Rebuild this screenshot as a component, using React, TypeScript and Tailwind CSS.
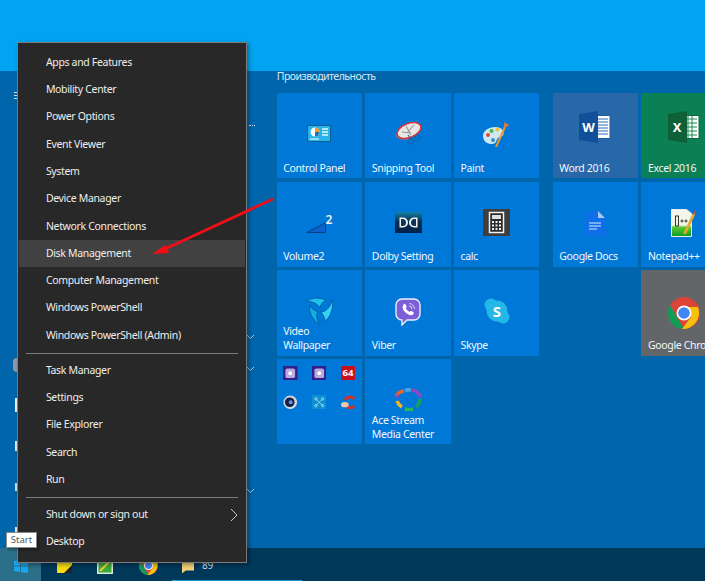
import * as React from "react";

const font = "font-['Noto_Sans',sans-serif]";

const menuTop = [
  "Apps and Features",
  "Mobility Center",
  "Power Options",
  "Event Viewer",
  "System",
  "Device Manager",
  "Network Connections",
  "Disk Management",
  "Computer Management",
  "Windows PowerShell",
  "Windows PowerShell (Admin)",
];
const menuMid = ["Task Manager", "Settings", "File Explorer", "Search", "Run"];

function MenuRow({ label, active, arrow }: { label: string; active?: boolean; arrow?: boolean }) {
  return (
    <div className={`flex h-[27.3px] items-center justify-between pl-[27px] pr-[7.5px] text-[10.5px] tracking-[-0.33px] text-[#eeeeee] ${active ? "bg-[#414141]" : ""}`}>
      <span>{label}</span>
      {arrow && (
        <svg width="8" height="14" viewBox="0 0 8 14" fill="none" stroke="#c4c4c4" strokeWidth="1">
          <path d="M1 1l6 6-6 6" />
        </svg>
      )}
    </div>
  );
}

function Separator() {
  return <div className="mx-[7px] my-[3.4px] h-px bg-[#7b7b7b]" />;
}

function Tile({ label, icon, bg = "bg-[#0078d7]", iconTop = "pt-[21px]" }: { label?: string; icon: React.ReactNode; bg?: string; iconTop?: string }) {
  return (
    <div className={`flex h-[85.33px] w-[85.33px] shrink-0 flex-col overflow-hidden ${bg}`}>
      <div className={`flex h-[50px] items-start justify-center ${iconTop}`}>{icon}</div>
      {label && <div className="mt-auto whitespace-pre px-[6.5px] pb-[3.5px] text-[10.5px] leading-[14px] tracking-[-0.35px] text-[#f1f7fc]">{label}</div>}
    </div>
  );
}

function ControlPanelIcon() {
  return (
    <svg width="24" height="17" viewBox="0 0 24 17">
      <rect x="0.500" y="0.500" width="23" height="16" fill="#27b4ea" stroke="#0b5f95" />
      <circle cx="8" cy="7" r="4.500" fill="#f4fbff" />
      <path d="M8 7V2.500A4.500 4.500 0 0 1 12.500 7z" fill="#f39a1f" />
      <path d="M8 7h4.500A4.500 4.500 0 0 1 8 11.500z" fill="#2a6fb8" />
      <path d="M15 4h6M15 7h6M15 10h6" stroke="#e3f6fd" strokeWidth="1.500" />
      <path d="M3 14h9" stroke="#e3f6fd" strokeWidth="1.200" />
    </svg>
  );
}

function SnipIcon() {
  return (
    <svg width="27" height="24" viewBox="0 0 27 24">
      <ellipse cx="9.500" cy="13.500" rx="9" ry="4.500" fill="#4a80c4" />
      <ellipse cx="14" cy="8.500" rx="12.500" ry="7" transform="rotate(-22 14 8.500)" fill="#e9e5e2" stroke="#d8323a" strokeWidth="1.500" />
      <path d="M11 4l5 9M19 3l-7 8M7 10l9 1" stroke="#97979d" strokeWidth="1.100" />
      <circle cx="16" cy="19.500" r="2.500" fill="none" stroke="#0f67b5" strokeWidth="1.300" />
      <circle cx="22.500" cy="16" r="2.500" fill="none" stroke="#0f67b5" strokeWidth="1.300" />
      <path d="M13 13l3 4M18 15l3 0" stroke="#0f67b5" strokeWidth="1.200" />
    </svg>
  );
}

function PaintIcon() {
  return (
    <svg width="27" height="26" viewBox="0 0 27 26">
      <path d="M0 15C0 9.500 6 6 12 6c6 0 9 3 8.500 7-.5 3-4 2.500-6 4.500C13 19.500 13.500 23 8.500 23 4 23 0 20 0 15z" fill="#cde8f3" />
      <circle cx="5" cy="14" r="2" fill="#e0483a" />
      <circle cx="8.500" cy="10" r="2" fill="#4bb849" />
      <circle cx="14.500" cy="8.500" r="2" fill="#f2c037" />
      <circle cx="10" cy="19" r="2" fill="#2b8fd6" />
      <path d="M13 26L22 6" stroke="#f0962b" strokeWidth="2" />
      <path d="M20.500 7l1-6 5 3.500z" fill="#d9793a" />
    </svg>
  );
}

function VolumeIcon() {
  return (
    <div className="relative h-[18px] w-[26px]">
      <svg width="20" height="11" viewBox="0 0 20 11" className="absolute bottom-0 left-0">
        <path d="M.8 10.500L19.500.8v9.700z" fill="#0a62cc" stroke="#0a3f86" />
      </svg>
      <span className="absolute right-0 top-[-1px] text-[12px] font-semibold leading-none text-[#eeeeee]">2</span>
    </div>
  );
}

function DolbyIcon() {
  return (
    <svg width="27" height="21" viewBox="0 0 27 21">
      <defs>
        <linearGradient id="dolbyBg" x1="0" y1="0" x2="0" y2="1">
          <stop offset="0" stopColor="#1580a8" />
          <stop offset="0.45" stopColor="#08304e" />
          <stop offset="1" stopColor="#03204a" />
        </linearGradient>
      </defs>
      <rect width="27" height="21" fill="url(#dolbyBg)" />
      <path d="M4.500 5.500H8a5 5 0 0 1 5 5 5 5 0 0 1-5 5H4.500zM22.500 5.500H19a5 5 0 0 0-5 5 5 5 0 0 0 5 5h3.500z" fill="#f2f2f2" />
      <path d="M6 7h1.500a3.500 3.500 0 0 1 0 7H6zM21 7h-1.500a3.500 3.500 0 0 0 0 7H21z" fill="#0b3559" />
    </svg>
  );
}

function CalcIcon() {
  return (
    <svg width="27" height="27" viewBox="0 0 27 27">
      <rect width="27" height="27" fill="#3e3e3e" />
      <rect x="6.500" y="3.500" width="14" height="20" fill="#2a2a2a" stroke="#f2f2f2" strokeWidth="1.500" />
      <rect x="9" y="6" width="9" height="4" fill="#dddddd" />
      <path d="M9 13h2M12.500 13h2M16 13h2M9 16.500h2M12.500 16.500h2M16 16.500h2M9 20h2M12.500 20h2M16 20h2" stroke="#f2f2f2" strokeWidth="1.800" />
    </svg>
  );
}

function WordIcon() {
  return (
    <svg width="32" height="32" viewBox="0 0 32 32">
      <rect x="14" y="4.500" width="17" height="23" fill="#fff" stroke="#1f5da6" />
      <path d="M18 8h11M18 11h11M18 14h11M18 17h11M18 20h11M18 23h11" stroke="#2b6cb5" />
      <path d="M0 3l19-3v32L0 29z" fill="#124f9b" />
      <text x="9.500" y="21" textAnchor="middle" fontSize="13" fontWeight="700" fill="#fff" fontFamily="Noto Sans, sans-serif">W</text>
    </svg>
  );
}

function ExcelIcon() {
  return (
    <svg width="32" height="32" viewBox="0 0 32 32">
      <rect x="14" y="4.500" width="17" height="23" fill="#fff" stroke="#0b6a3c" />
      <path d="M18 8h11M18 12h11M18 16h11M18 20h11M18 24h11M20 5v22M24 5v22" stroke="#1d8a52" />
      <path d="M0 3l19-3v32L0 29z" fill="#0f5f37" />
      <text x="9" y="21" textAnchor="middle" fontSize="13" fontWeight="700" fill="#fff" fontFamily="Noto Sans, sans-serif">X</text>
    </svg>
  );
}

function DocsIcon() {
  return (
    <svg width="20" height="25" viewBox="0 0 20 25">
      <path d="M0 0h13l7 7v18H0z" fill="#0f6fe8" />
      <path d="M13 0l7 7h-7z" fill="#a6c8f5" />
      <path d="M4 12h12M4 15h12M4 18h8" stroke="#dcebfc" strokeWidth="1.200" />
    </svg>
  );
}

function NotepadIcon() {
  return (
    <svg width="26" height="28" viewBox="0 0 26 28">
      <defs>
        <linearGradient id="nppBg" x1="0" y1="0" x2="0" y2="1">
          <stop offset="0" stopColor="#f6f6ee" />
          <stop offset="0.58" stopColor="#f0f4e0" />
          <stop offset="0.66" stopColor="#58c832" />
          <stop offset="1" stopColor="#0f9a22" />
        </linearGradient>
      </defs>
      <path d="M0.500 0.500h15l5 4v23h-20z" fill="url(#nppBg)" stroke="#ececec" />
      <rect x="4.500" y="7" width="3" height="10" fill="none" stroke="#333" />
      <path d="M9.500 12h3M11 10.500v3M13.500 12h3M15 10.500v3" stroke="#333" />
      <path d="M13.500 25L23 5" stroke="#e8a62a" strokeWidth="2.800" />
      <path d="M22.500 6l1.500-5.500 1.500 3z" fill="#d8412b" />
    </svg>
  );
}

function WallpaperIcon() {
  return (
    <svg width="27" height="28" viewBox="0 0 27 28">
      <path d="M0 4C6 .5 15 0 20 3.500c-3 1-5.500 3.500-6 7.500C12 7 7 4.500 0 4z" fill="#1cc4ea" stroke="#0a5da8" />
      <path d="M26.500 3c1 8-1.500 17-7.500 21-.5-4-2-7.500-5-9 6 .5 10-5 12.500-12z" fill="#2fd3f0" stroke="#0a5da8" />
      <path d="M13.500 27.500C7.500 24 2.500 16 3.500 8.500c2 3 5 5.500 8.500 6-2 3-1.500 8 1.500 13z" fill="#12b0e0" stroke="#0a5da8" />
    </svg>
  );
}

function ViberIcon() {
  return (
    <svg width="26" height="28" viewBox="0 0 26 28">
      <path d="M7 1h12a6 6 0 0 1 6 6v9a6 6 0 0 1-6 6h-7l-5 5v-5a6 6 0 0 1-6-6V7a6 6 0 0 1 6-6z" fill="#7a5fd8" stroke="#eeeefa" strokeWidth="1.400" />
      <path d="M8 6.500c1-1 2-.8 2.500 0l1 1.800c.3.700 0 1.200-.8 1.800.8 1.800 2 3 3.800 3.800.6-.8 1.100-1.100 1.800-.8l1.800 1c.8.500 1 1.500 0 2.500-1 1-3 .8-5.500-.6-2.600-1.500-4.600-4-5-6-.2-1.400.6-2.600 1.400-3.500z" fill="#fff" />
      <path d="M14 5.500a5.500 5.500 0 0 1 5.500 5.500M14 8a3 3 0 0 1 3 3" fill="none" stroke="#d8d2f5" />
    </svg>
  );
}

function SkypeIcon() {
  return (
    <svg width="26" height="26" viewBox="0 0 26 26">
      <circle cx="7" cy="7" r="6.500" fill="#23b8e8" />
      <circle cx="19" cy="19" r="6.500" fill="#23b8e8" />
      <circle cx="13" cy="13" r="10.500" fill="#23b8e8" />
      <text x="13" y="18.500" textAnchor="middle" fontSize="15" fontWeight="700" fill="#fff" fontFamily="Noto Sans, sans-serif">S</text>
    </svg>
  );
}

function AceIcon() {
  return (
    <svg width="28" height="23" viewBox="0 0 28 23" fill="none" strokeWidth="3.500">
      <path d="M2 8a11 11 0 0 1 8-5" stroke="#e8642b" />
      <path d="M11 2.500a11 11 0 0 1 6-.5" stroke="#4aa8e0" />
      <path d="M18 2a11 11 0 0 1 8 6" stroke="#8a4bc0" />
      <path d="M26 11a11 11 0 0 1-4 8" stroke="#1aa05a" />
      <path d="M19 21a11 11 0 0 1-8 0" stroke="#2db84a" />
      <path d="M8 19a11 11 0 0 1-5-6" stroke="#f0b428" />
      <path d="M0 9l5 1-1-5zM23 7l4 3 1-5z" strokeWidth="0" fill="#8a4bc0" />
    </svg>
  );
}

function ChromeIcon({ size = 32 }: { size?: number }) {
  return (
    <svg width={size} height={size} viewBox="0 0 32 32">
      <circle cx="16" cy="16" r="16" fill="#db4437" />
      <path d="M2.100 8L9 20l7 12A16 16 0 0 1 2.100 8z" fill="#0f9d58" />
      <path d="M16 10h13.900A16 16 0 0 1 14 31.900L23 20z" fill="#f4c20d" />
      <circle cx="16" cy="16" r="7.500" fill="#fff" />
      <circle cx="16" cy="16" r="5.800" fill="#4285f4" />
    </svg>
  );
}

function MiniApp({ kind }: { kind: string }) {
  if (kind === "purple") {
    return (
      <svg width="14.500" height="14.500" viewBox="0 0 15 15">
        <rect width="15" height="15" fill="#35208a" />
        <rect x="2.500" y="2.500" width="10" height="10" rx="2" fill="#b8a8e0" />
        <circle cx="7.500" cy="7.500" r="2" fill="#fff" />
      </svg>
    );
  }
  if (kind === "aida") {
    return <div className="flex h-[14.5px] w-[14.5px] items-center justify-center bg-[#c8101e] text-[9.5px] font-bold leading-none text-white">64</div>;
  }
  if (kind === "c4d") {
    return (
      <svg width="14.500" height="14.500" viewBox="0 0 15 15">
        <circle cx="7.500" cy="7.500" r="7" fill="#d8d8e0" />
        <circle cx="7" cy="7.500" r="5" fill="#12204a" />
        <circle cx="8" cy="7.500" r="2" fill="#6f8fd8" />
      </svg>
    );
  }
  if (kind === "drone") {
    return (
      <svg width="14.500" height="14.500" viewBox="0 0 15 15">
        <rect width="15" height="15" fill="#0e8fd0" />
        <path d="M4 4l7 7M11 4l-7 7" stroke="#8fd3ee" strokeWidth="1" />
        <circle cx="4" cy="4" r="1.300" fill="none" stroke="#8fd3ee" />
        <circle cx="11" cy="4" r="1.300" fill="none" stroke="#8fd3ee" />
        <circle cx="4" cy="11" r="1.300" fill="none" stroke="#8fd3ee" />
        <circle cx="11" cy="11" r="1.300" fill="none" stroke="#8fd3ee" />
      </svg>
    );
  }
  return (
    <svg width="14.500" height="14.500" viewBox="0 0 15 15">
      <path d="M13.500 4A6 6 0 0 0 4 5" fill="none" stroke="#e02b20" strokeWidth="3" />
      <path d="M13.500 11.500a6 6 0 0 1-7 1" fill="none" stroke="#e02b20" strokeWidth="3" />
      <ellipse cx="4" cy="10" rx="4" ry="2.800" fill="#f2c7a8" />
    </svg>
  );
}

function FolderTile() {
  return (
    <div className="grid h-[85.33px] w-[85.33px] shrink-0 grid-cols-[repeat(3,14.5px)] content-start gap-x-[14.3px] gap-y-[14.5px] bg-[#0078d7] pl-[6.5px] pt-[7px]">
      {["purple", "purple", "aida", "c4d", "drone", "cc"].map((k, i) => (
        <div key={i} className="flex h-[14.5px] justify-center">
          <MiniApp kind={k} />
        </div>
      ))}
    </div>
  );
}

function Chevron() {
  return (
    <svg width="9" height="6" viewBox="0 0 9 6" fill="none" stroke="#a9c9e2">
      <path d="M1 1l3.500 3.500L8 1" />
    </svg>
  );
}

export default function App() {
  return (
    <div className={`relative flex h-[581px] w-[705px] flex-col overflow-hidden bg-[#0065aa] ${font}`}>
      <div className="h-[71px] shrink-0 bg-[#00a4f0]" />

      <div className="flex min-h-0 flex-1 bg-[#0065aa]">
        {/* left rail and app list, mostly hidden behind the menu */}
        <div className="flex w-[276.7px] shrink-0">
          <div className="flex w-[17px] flex-col items-end">
            <div className="mt-[21px] flex flex-col gap-[2px]">
              <span className="block h-px w-[3px] bg-[#cde2f2]" />
              <span className="block h-px w-[3px] bg-[#cde2f2]" />
              <span className="block h-px w-[3px] bg-[#cde2f2]" />
            </div>
            <div className="mt-[259px] h-[14px] w-[4px] rounded-l-full bg-[#8f9aa6]" />
            <div className="mt-[26px] h-[14px] w-[2px] bg-[#f0f0f0]" />
            <div className="mt-[29px] h-[10px] w-[2px] bg-[#e0e8f0]" />
            <div className="mt-[32px] h-[8px] w-[2px] bg-[#c8dcec]" />
            <div className="mt-[36px] h-[8px] w-[2px] bg-[#e0e8f0]" />
          </div>
          <div className="flex w-[259.7px] flex-col items-end pr-[22px]">
            <div className="mt-[54px] h-[2px] w-[6px] border-t border-dotted border-[#dcebf6]" />
            <div className="mt-[207px]"><Chevron /></div>
            <div className="mt-[26px]"><Chevron /></div>
            <div className="mt-[116px]"><Chevron /></div>
          </div>
        </div>

        {/* tiles */}
        <div className="flex min-w-0 flex-col">
          <div className="h-[22px] text-[10.5px] leading-[10px] tracking-[-0.5px] text-[#d7e8f5]">Производительность</div>
          <div className="flex gap-[13.5px]">
            <div className="grid grid-cols-[repeat(3,85.33px)] content-start gap-[3.33px]">
              <Tile label="Control Panel" icon={<ControlPanelIcon />} iconTop="pt-[32px]" />
              <Tile label="Snipping Tool" icon={<SnipIcon />} iconTop="pt-[29px]" />
              <Tile label="Paint" icon={<PaintIcon />} iconTop="pt-[28px]" />
              <Tile label="Volume2" icon={<VolumeIcon />} iconTop="pt-[33.5px]" />
              <Tile label="Dolby Setting" icon={<DolbyIcon />} iconTop="pt-[30px]" />
              <Tile label="calc" icon={<CalcIcon />} iconTop="pt-[27.5px]" />
              <Tile label={"Video\nWallpaper"} icon={<WallpaperIcon />} iconTop="pt-[27px]" />
              <Tile label="Viber" icon={<ViberIcon />} iconTop="pt-[27.5px]" />
              <Tile label="Skype" icon={<SkypeIcon />} iconTop="pt-[27.5px]" />
              <FolderTile />
              <Tile label={"Ace Stream\nMedia Center"} icon={<AceIcon />} iconTop="pt-[29px]" />
            </div>
            <div className="grid grid-cols-[repeat(2,85.33px)] content-start gap-[3.33px]">
              <Tile label="Word 2016" icon={<WordIcon />} bg="bg-[#2968a8]" iconTop="pt-[18px]" />
              <Tile label="Excel 2016" icon={<ExcelIcon />} bg="bg-[#0b8055]" iconTop="pt-[18px]" />
              <Tile label="Google Docs" icon={<DocsIcon />} iconTop="pt-[29.5px]" />
              <Tile label="Notepad++" icon={<NotepadIcon />} iconTop="pt-[27.5px]" />
              <div className="h-[85.33px] w-[85.33px]" />
              <Tile label="Google Chrome" icon={<ChromeIcon />} bg="bg-[#636669]" iconTop="pt-[27px]" />
            </div>
          </div>
        </div>
      </div>

      {/* taskbar */}
      <div className="relative flex h-[33px] shrink-0 items-center bg-[#00385a]">
        <div className="flex h-full w-[41px] items-center justify-center bg-[#2b7088] pt-[3px]">
          <svg width="14" height="14" viewBox="0 0 14 14" fill="#16a8f0">
            <path d="M0 2l6-1v5.500H0zM7 1l7-1v6.500H7zM0 7.500h6V13l-6-1zM7 7.500h7V14l-7-1z" />
          </svg>
        </div>
        <div className="ml-[16px] flex items-center pt-[2px]">
          <svg width="15" height="15" viewBox="0 0 15 15">
            <rect width="15" height="15" fill="#f7dc14" />
            <path d="M15 7v8H7z" fill="#222" />
          </svg>
          <svg className="ml-[25px]" width="16" height="17" viewBox="0 0 16 17">
            <rect width="16" height="17" fill="#dfe8d8" />
            <rect x="1.500" y="4" width="13" height="11.500" fill="#3aa83a" />
            <path d="M4 4V1M7 4V1M10 4V1" stroke="#444" />
            <path d="M3 14l9-9" stroke="#f0d030" strokeWidth="2" />
          </svg>
          <div className="ml-[26px] flex"><ChromeIcon size={19} /></div>
          <svg className="ml-[24px]" width="12" height="16" viewBox="0 0 13 16">
            <path d="M3 0h10v13H4l-4 3V5z" fill="#f4d27a" />
          </svg>
          <span className="ml-[8px] mb-[2px] text-[10px] leading-none tracking-[-0.2px] text-[#cfdce8]">89</span>
        </div>
        <div className="absolute bottom-0 left-[172px] h-px w-[130px] bg-[#1a9ad0]" />
      </div>

      {/* context menu */}
      <div className="absolute left-[17.4px] top-[42px] h-[521px] w-[229.3px] border border-[#7a7a7a] bg-[#282828] px-[0.5px] pt-[6px] shadow-[2px_2px_4px_rgba(0,0,0,0.35)]">
        {menuTop.map((l) => (
          <MenuRow key={l} label={l} active={l === "Disk Management"} />
        ))}
        <Separator />
        {menuMid.map((l) => (
          <MenuRow key={l} label={l} />
        ))}
        <Separator />
        <MenuRow label="Shut down or sign out" arrow />
        <MenuRow label="Desktop" />
      </div>

      {/* tooltip */}
      <div className="absolute left-[6px] top-[531.5px] flex h-[16.5px] w-[31px] items-center justify-center border border-[#8a8a8a] bg-white text-[9.5px] text-[#555555] shadow-[2px_2px_2px_rgba(0,0,0,0.3)]">Start</div>

      {/* red annotation arrow */}
      <svg className="absolute left-[150px] top-[195px]" width="126" height="65" viewBox="0 0 126 65">
        <path d="M123 4L14 54.500" stroke="#f00f16" strokeWidth="2.800" />
        <path d="M2 59l14-9.500 3 8.500z" fill="#f00f16" />
      </svg>
    </div>
  );
}
